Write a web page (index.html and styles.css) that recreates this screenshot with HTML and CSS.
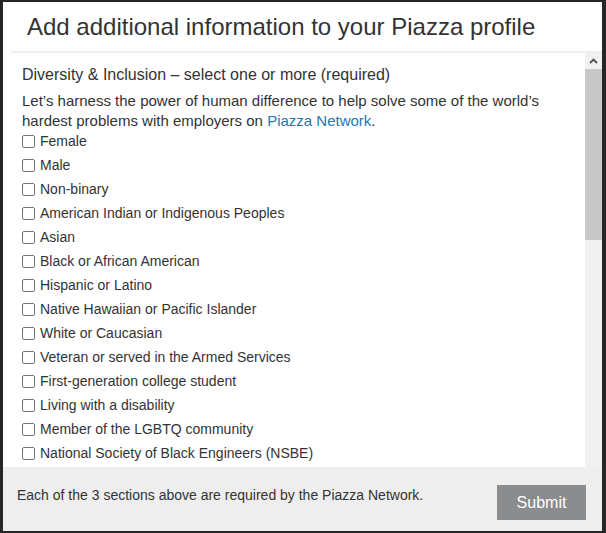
FILE: index.html
```html
<!DOCTYPE html>
<html>
<head>
<meta charset="utf-8">
<link rel="stylesheet" href="styles.css">
</head>
<body>
<div class="modal">
  <div class="header">
    <h1 class="title">Add additional information to your Piazza profile</h1>
  </div>
  <div class="body">
    <div class="content">
      <h2 class="section-title">Diversity &amp; Inclusion – select one or more (required)</h2>
      <p class="intro">Let’s harness the power of human difference to help solve some of the world’s hardest problems with employers on <a class="link" href="#">Piazza Network</a>.</p>
      <ul class="options">
        <li class="option"><span class="box"></span><span class="label">Female</span></li>
        <li class="option"><span class="box"></span><span class="label">Male</span></li>
        <li class="option"><span class="box"></span><span class="label">Non-binary</span></li>
        <li class="option"><span class="box"></span><span class="label">American Indian or Indigenous Peoples</span></li>
        <li class="option"><span class="box"></span><span class="label">Asian</span></li>
        <li class="option"><span class="box"></span><span class="label">Black or African American</span></li>
        <li class="option"><span class="box"></span><span class="label">Hispanic or Latino</span></li>
        <li class="option"><span class="box"></span><span class="label">Native Hawaiian or Pacific Islander</span></li>
        <li class="option"><span class="box"></span><span class="label">White or Caucasian</span></li>
        <li class="option"><span class="box"></span><span class="label">Veteran or served in the Armed Services</span></li>
        <li class="option"><span class="box"></span><span class="label">First-generation college student</span></li>
        <li class="option"><span class="box"></span><span class="label">Living with a disability</span></li>
        <li class="option"><span class="box"></span><span class="label">Member of the LGBTQ community</span></li>
        <li class="option"><span class="box"></span><span class="label">National Society of Black Engineers (NSBE)</span></li>
      </ul>
    </div>
    <div class="scrollbar">
      <div class="arrow">
        <svg width="9" height="6" viewBox="0 0 9 6"><path d="M1 5 L4.5 1.5 L8 5" fill="none" stroke="#505050" stroke-width="1.8"/></svg>
      </div>
      <div class="thumb"></div>
      <div class="track"></div>
    </div>
  </div>
  <div class="footer">
    <p class="note">Each of the 3 sections above are required by the Piazza Network.</p>
    <button class="submit">Submit</button>
  </div>
</div>
</body>
</html>
```
FILE: styles.css
```css
html, body {
  margin: 0;
  padding: 0;
}
body {
  background: #262626;
  padding: 2px 4px 2px 3px;
  height: 533px;
  box-sizing: border-box;
  font-family: "Liberation Sans", Arial, sans-serif;
  color: #333;
}
.modal {
  background: #fff;
  height: 529px;
  display: flex;
  flex-direction: column;
}
.header {
  height: 49px;
  padding: 0 0 0 24px;
  display: flex;
  align-items: center;
  flex: none;
}
.title {
  margin: 0;
  font-size: 24px;
  font-weight: normal;
  color: #333;
  padding-top: 1px;
}
.body {
  flex: 1;
  display: flex;
  margin-left: 8px;
  border-top: 2px solid #eeeeee;
  overflow: hidden;
  min-height: 0;
}
.content {
  flex: 1;
  overflow: hidden;
  padding: 12px 0 0 11px;
}
.section-title {
  margin: 0;
  font-size: 16px;
  font-weight: normal;
  line-height: 20px;
  color: #333;
}
.intro {
  margin: 6px 0 0;
  font-size: 15px;
  line-height: 20px;
}
.link {
  color: #2577ad;
  text-decoration: none;
}
.options {
  list-style: none;
  margin: -2px 0 0;
  padding: 0;
}
.option {
  display: flex;
  align-items: center;
  height: 24px;
  font-size: 14px;
}
.box {
  width: 11px;
  height: 11px;
  border: 1px solid #767676;
  border-radius: 2px;
  margin: 0 5px 0 0;
  background: #fff;
  flex: none;
}
.scrollbar {
  width: 17px;
  flex: none;
  display: flex;
  flex-direction: column;
  background: #f1f1f1;
}
.arrow {
  height: 16px;
  display: flex;
  align-items: center;
  justify-content: center;
}
.thumb {
  height: 171px;
  background: #c8c8c8;
}
.track {
  flex: 1;
}
.footer {
  height: 64px;
  flex: none;
  background: #eeeeee;
  display: flex;
  align-items: center;
  justify-content: space-between;
  padding: 0 16px 0 14px;
}
.note {
  margin: 0 0 8px;
  font-size: 14px;
  color: #333;
}
.submit {
  width: 89px;
  height: 35px;
  border: none;
  background: #8a8c8e;
  color: #fff;
  font-family: "Liberation Sans", Arial, sans-serif;
  font-size: 16px;
  margin-top: 7px;
  padding: 0;
}
```
